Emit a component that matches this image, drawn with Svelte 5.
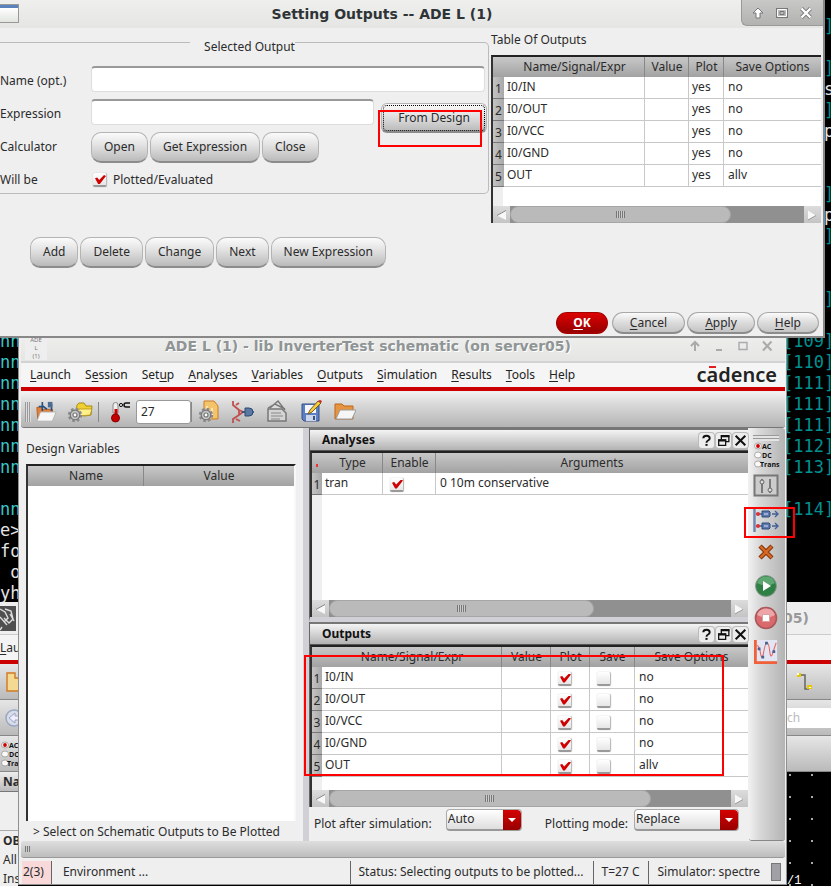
<script lang="ts">
	type Col = { label: string; width?: number };

	const menus: [string, number][] = [
		['Launch', 0],
		['Session', 1],
		['Setup', 3],
		['Analyses', 0],
		['Variables', 0],
		['Outputs', 0],
		['Simulation', 0],
		['Results', 0],
		['Tools', 0],
		['Help', 0]
	];

	const dialogCols: Col[] = [
		{ label: '', width: 11 },
		{ label: 'Name/Signal/Expr', width: 141 },
		{ label: 'Value', width: 44 },
		{ label: 'Plot', width: 35 },
		{ label: 'Save Options' }
	];
	const analysisCols: Col[] = [
		{ label: '', width: 10 },
		{ label: 'Type', width: 61 },
		{ label: 'Enable', width: 53 },
		{ label: 'Arguments' }
	];
	const outputCols: Col[] = [
		{ label: '', width: 10 },
		{ label: 'Name/Signal/Expr', width: 180 },
		{ label: 'Value', width: 49 },
		{ label: 'Plot', width: 39 },
		{ label: 'Save', width: 45 },
		{ label: 'Save Options' }
	];

	let outputs = $state([
		{ name: 'I0/IN', plot: true, save: false, options: 'no' },
		{ name: 'I0/OUT', plot: true, save: false, options: 'no' },
		{ name: 'I0/VCC', plot: true, save: false, options: 'no' },
		{ name: 'I0/GND', plot: true, save: false, options: 'no' },
		{ name: 'OUT', plot: true, save: false, options: 'allv' }
	]);
	let tranEnabled = $state(true);
	let plotted = $state(true);
	let temperature = $state('27');

	// terminal rows: left text, right text, plain (white) or coloured
	const term: [string, string, boolean?][] = [
		['', ''],
		['', '    ]'],
		['', ''],
		['', '    ]'],
		['', '    s', true],
		['', '    ]'],
		['', '    p', true],
		['', ''],
		['', ''],
		['', '    ]'],
		['', '    p', true],
		['', '    ]'],
		['', ''],
		['', ''],
		['', '    ]'],
		['', ''],
		['nn', '[109]'],
		['nn', '[110]'],
		['nn', '[111]'],
		['nn', '[111]'],
		['nn', '[111]'],
		['nn', '[112]'],
		['nn', '[113]'],
		['', ''],
		['nn', '[114]'],
		['e>', '', true],
		['fo', '', true],
		[' o', '', true],
		['yh', '', true]
	];
</script>

{#snippet head(cols: Col[], mark = false)}
	<colgroup>
		{#each cols as c}
			<col style={c.width ? `width: ${c.width}px` : undefined} />
		{/each}
	</colgroup>
	<thead>
		<tr>
			{#each cols as c, i}
				<th class:mark={mark && i === 0}>{c.label}</th>
			{/each}
		</tr>
	</thead>
{/snippet}

{#snippet scrollbar(size: number)}
	<div class="scrollbar">
		<button type="button" class="arrow" aria-label="Scroll left">
			<svg viewBox="0 0 16 16"><path d="M13 3.500 4 8.500l9 4.500z" fill="#f8f8f8" /><path d="M13 3.500 4 8.500" stroke="#888" fill="none" /></svg>
		</button>
		<div class="track">
			<div class="thumb" style="width: {size}%"><i></i></div>
		</div>
		<button type="button" class="arrow" aria-label="Scroll right">
			<svg viewBox="0 0 16 16"><path d="M4 3.500 12 8.500l-8 4.500z" fill="#f8f8f8" /><path d="M4 13l8-4.500" stroke="#999" fill="none" /></svg>
		</button>
	</div>
{/snippet}

{#snippet gear()}
	<g stroke="#777" stroke-width="1.200" fill="#c4c4c4">
		<circle cx="8" cy="15" r="6" stroke-dasharray="2.600 2.100" stroke-width="2.400" stroke="#8a8a8a" />
		<circle cx="8" cy="15" r="4.800" />
		<circle cx="8" cy="15" r="2" fill="#fff" />
	</g>
{/snippet}

{#snippet dockTitle(title: string)}
	<header class="dock-title">
		<h2>{title}</h2>
		<button aria-label="{title} help"><svg viewBox="0 0 14 14"><path d="M4 5Q4 2.500 7 2.500T10 5Q10 6.300 8.500 7Q7 7.700 7 9" fill="none" stroke="#111" stroke-width="1.800" /><path d="M6 10.200h2v1.800H6z" fill="#111" /></svg></button>
		<button aria-label="Float {title}"><svg viewBox="0 0 14 14"><path d="M5 6V2.500h7V8H9.500M2.500 6.500H9v5H2.500z" fill="none" stroke="#111" stroke-width="1.200" /><path d="M4.500 2h8v2h-8zM2 6h7.500v2H2z" fill="#111" /></svg></button>
		<button aria-label="Close {title}"><svg viewBox="0 0 14 14"><path d="M2.500 2.500l9 9M11.500 2.500l-9 9" stroke="#111" stroke-width="1.900" /></svg></button>
	</header>
{/snippet}

{#snippet modes()}
	<svg class="modes" viewBox="0 0 28 28">
		{#each ['AC', 'DC', 'Trans'] as m, i}
			<ellipse cx="5" cy={5 + i * 9} rx="3.500" ry="3" fill="#fafafa" stroke="#999" stroke-width=".8" />
			<text x={i === 2 ? 7 : 9} y={8 + i * 9}>{m}</text>
		{/each}
		<circle cx="5" cy="5" r="1.900" fill="#d00000" />
	</svg>
{/snippet}

<div class="desktop">
	<div class="terminal">
		{#each term as [left, right, plain]}
			<div class="line" class:plain><span>{left}</span><span class="tail">{right}</span></div>
		{/each}
	</div>

	<section class="schematic" aria-label="Schematic editor">
		<div class="s-title">
			<svg class="s-icon" viewBox="0 0 18 26">
				<rect width="16" height="25" y="1" fill="#505050" />
				<path d="M0 4l5 3 3 6-4 4M5 4l6 2 2 8-4 4-5-5M0 12l7 8M2 22l-2 3M10 9l4 7" fill="none" stroke="#ddd" stroke-width="1.400" />
			</svg>
			<span>05)</span>
		</div>
		<div class="s-menu"><u>L</u>au</div>
		<div class="s-bar">
			<svg viewBox="0 0 18 22"><path d="M7 2h8v5h6v13H7z" fill="#f4d992" stroke="#cf7a22" stroke-width="1.400" /></svg>
			<svg class="wire" viewBox="0 0 44 34"><path d="M13 10h5v14h4" fill="none" stroke="#666" stroke-width="1.500" /><path d="M10 8h4v4h-4zM20 20h5v4h-5z" fill="#e8c800" /><path d="M10 8h2v2h-2zM22 22h2v1h-2z" fill="#fff" /></svg>
		</div>
		<div class="s-bar">
			<svg viewBox="0 0 18 22"><circle cx="14" cy="11" r="8" fill="#d7dce8" stroke="#9aa6c4" stroke-width="1.500" /><path d="M18 9h-3V6l-6 5 6 5v-3h3" fill="#eef" stroke="#9aa6c4" /></svg>
			<span class="s-search">ch</span>
		</div>
		<div class="s-bar">{@render modes()}</div>
		<div class="s-body">
			<div class="s-nav">
				<b class="s-head">Na</b>
				<div class="s-gap"></div>
				<b>OB</b>
				<span>All</span>
				<span>Ins</span>
			</div>
			<div class="s-canvas">/1</div>
		</div>
	</section>

	<main class="ade">
		<header class="ade-title">
			<div class="ade-icon">ADE<br />L<br />(1)</div>
			<h1>ADE L (1) - lib InverterTest schematic (on server05)</h1>
			<div class="ade-controls">
				<button aria-label="Shade"><svg viewBox="0 0 12 12"><path d="M6 11V2M2 6l4-4 4 4" /></svg></button>
				<button aria-label="Minimize"><svg viewBox="0 0 12 12"><path d="M3 10h6" /></svg></button>
				<button aria-label="Maximize"><svg viewBox="0 0 12 12"><path d="M2 2.500h8v7H2z" stroke-width="1.400" /></svg></button>
				<button aria-label="Close window"><svg viewBox="0 0 12 12"><path d="M2 1.500l8.500 9M10.500 1.500l-8.500 9" /></svg></button>
			</div>
		</header>
		<nav class="menubar">
			{#each menus as [label, key]}
				<a href="#{label.toLowerCase()}">{label.slice(0, key)}<u>{label[key]}</u>{label.slice(key + 1)}</a>
			{/each}
			<span class="logo">c<span>a</span>dence</span>
		</nav>

		<div class="toolbar">
			<i class="grip"></i>
			<button aria-label="Setup design"><svg viewBox="0 0 24 24"><path d="M2 7h5l2 2h10v11H3z" fill="#e0803a" stroke="#b85c1c" /><path d="M6 12h17l-4 10H2z" fill="#f6f6f6" stroke="#b0b0b0" /><path d="M8 1v10M8 6H4M8 5l5 4M18 3v8" stroke="#28527e" stroke-width="1.800" fill="none" /><path d="M14 1h5v6h-5z" fill="#4d6c94" /></svg></button>
			<button class="wide" aria-label="Load state"><svg viewBox="0 0 26 24"><path d="M10 5l2-2h5l2 3h6l-1 9-6 1-9-1z" fill="#f0d030" stroke="#a98a1a" /><path d="M12 9h13l-2 6-12 1z" fill="#fff08a" stroke="#a98a1a" stroke-width=".7" />{@render gear()}</svg></button>
			<i class="sep"></i>
			<label class="temp">
				<svg viewBox="0 0 22 24"><path d="M3 5a2.500 2.500 0 0 1 5 0v8H3z" fill="#eee" stroke="#888" /><path d="M4.500 9h3v8h-3z" fill="#c00" /><circle cx="5.500" cy="18" r="4" fill="#c30000" stroke="#8a0000" /><circle cx="11" cy="5" r="1.600" fill="none" stroke="#111" /><path d="M20 3h-4q-2 0-2 2t2 2h4" fill="none" stroke="#111" stroke-width="1.500" /></svg>
				<input type="text" bind:value={temperature} aria-label="Temperature" />
			</label>
			<i class="sep tight"></i>
			<button aria-label="Edit model"><svg viewBox="0 0 22 24"><path d="M6 1h10l4 5v13H6z" fill="#f3c46c" stroke="#cf7a22" /><path d="M9 6v10M14 8v8" stroke="#ffe7b4" stroke-width="2" />{@render gear()}</svg></button>
			<button class="gap" aria-label="Simulation files"><svg viewBox="0 0 22 24"><path d="M1 1v4l6 5v5l-6 4v4M4 5l3-2M4 19l4 2M7 10l4 2-4 3" fill="none" stroke="#c05050" stroke-width="1.800" /><path d="M10 12h12" stroke="#2b4d78" stroke-width="1.600" /><path d="M13 8h4q4 0 4 4t-4 4h-4z" fill="#5b78a4" stroke="#2c4a70" /></svg></button>
			<button class="gap" aria-label="Notes"><svg viewBox="0 0 22 24"><path d="M4 8l8-7 7 9M2 8l7-4 10 5" fill="#ddd" stroke="#777" stroke-width="1.400" /><path d="M2 9h14l4 4v8H2z" fill="#d4d4d4" stroke="#777" stroke-width="1.500" /><path d="M5 13h10M5 16h12M5 19h9" stroke="#888" /></svg></button>
			<button class="gap" aria-label="Save state"><svg viewBox="0 0 22 24"><path d="M2 4h17v17H4l-2-2z" fill="#5b7fc0" stroke="#35518a" /><path d="M5 5h11v8H5z" fill="#f4f7ff" /><path d="M6 15h10v6H6z" fill="#ccd6ea" /><path d="M13 16h2v4h-2z" fill="#35518a" /><path d="M8 14l2-4 8-9 3 2-9 9z" fill="#f3cd3c" stroke="#7d5b1a" /><path d="M18 1l3 2 1-2-2-1z" fill="#c22" /></svg></button>
			<button class="gap" aria-label="Open results"><svg viewBox="0 0 22 24"><path d="M1 4h7l2 2h9v13H1z" fill="#e79440" stroke="#bb661b" /><path d="M6 10h16l-4 9H2z" fill="#f6f6f6" stroke="#9c9c9c" /></svg></button>
		</div>

		<div class="work">
			<div class="variables">
				<h2>Design Variables</h2>
				<div class="grid-box plainbox">
					<table>
						<colgroup><col class="vname" /><col /></colgroup>
						<thead><tr><th>Name</th><th>Value</th></tr></thead>
					</table>
				</div>
				<p>&gt; Select on Schematic Outputs to Be Plotted</p>
			</div>

			<div class="docks">
				<section class="dock analyses">
					{@render dockTitle('Analyses')}
					<div class="grid-box">
						<table>
							{@render head(analysisCols, true)}
							<tbody>
								<tr>
									<th>1</th>
									<td>tran</td>
									<td class="tick"><input type="checkbox" bind:checked={tranEnabled} aria-label="Enable tran" /></td>
									<td>0 10m conservative</td>
								</tr>
							</tbody>
						</table>
						<div class="filler"></div>
						{@render scrollbar(66)}
					</div>
				</section>
				<section class="dock outputs">
					{@render dockTitle('Outputs')}
					<div class="grid-box">
						<table>
							{@render head(outputCols)}
							<tbody>
								{#each outputs as row, i}
									<tr>
										<th>{i + 1}</th>
										<td>{row.name}</td>
										<td></td>
										<td class="tick"><input type="checkbox" bind:checked={row.plot} aria-label="Plot {row.name}" /></td>
										<td class="tick"><input type="checkbox" bind:checked={row.save} aria-label="Save {row.name}" /></td>
										<td>{row.options}</td>
									</tr>
								{/each}
							</tbody>
						</table>
						<div class="filler"></div>
						{@render scrollbar(80)}
					</div>
				</section>
				<div class="plot-options">
					<label for="after">Plot after simulation:</label>
					<span class="combo"><select id="after"><option>Auto</option></select></span>
					<label class="second" for="mode">Plotting mode:</label>
					<span class="combo long"><select id="mode"><option>Replace</option></select></span>
				</div>
			</div>

			<div class="sidebar">
				<i class="hgrip"></i>
				<button aria-label="Choose analyses">{@render modes()}</button>
				<button aria-label="Edit variables"><svg viewBox="0 0 26 24"><path d="M1.500 1.500h23v20h-23z" fill="#ccc" stroke="#777" stroke-width="2" /><path d="M9 5v14M17 5v14" stroke="#666" stroke-width="1.600" /><circle cx="9" cy="8" r="2" fill="#ddd" stroke="#666" /><circle cx="17" cy="16" r="2" fill="#ddd" stroke="#666" /></svg></button>
				<button class="setup" aria-label="Setup outputs"><svg viewBox="0 0 26 24"><path d="M1.500 0v24" stroke="#6f86b0" stroke-width="2.500" />{#each [6, 18] as y}<path d="M3 {y}h14M19 {y}h6M22 {y - 3}l3 3-3 3" stroke="#44609a" stroke-width="1.400" fill="none" /><circle cx="5" cy={y} r="2" fill="#d33" /><path d="M9 {y - 3}h7l1 1v4l-1 1H9z" fill="#5d7bb0" stroke="#2d4a7c" /><path d="M11 {y}h4" stroke="#d7e0f0" />{/each}</svg></button>
				<button aria-label="Delete"><svg viewBox="0 0 26 24"><path d="M7 6l12 12M19 6L7 18" stroke="#8a3b0c" stroke-width="4.500" /><path d="M7.500 6.500l11 11M18.500 6.500l-11 11" stroke="#d86a24" stroke-width="2.200" /></svg></button>
				<button class="run" aria-label="Run"><svg viewBox="0 0 26 24"><circle cx="13" cy="12" r="10.500" fill="#2e8044" stroke="#8a9a8e" /><path d="M4 9a9.500 9.500 0 0 1 18 0q-9 5-18 0" fill="#5fa873" /><path d="M10 7l8 5-8 5z" fill="#fff" /></svg></button>
				<button class="stop" aria-label="Stop"><svg viewBox="0 0 26 24"><circle cx="13" cy="12" r="10.500" fill="#d9696d" stroke="#a9585a" stroke-width="1.600" /><path d="M4 9a9.500 9.500 0 0 1 18 0q-9 5-18 0" fill="#eda5a7" /><path d="M9.500 8.500h7v7h-7z" fill="#fff" stroke="#d9a0a0" /></svg></button>
				<button class="plot" aria-label="Plot outputs"><svg viewBox="0 0 26 26"><path d="M3 0h22v23H3z" fill="#e3e6f2" /><path d="M3 6q3 0 4 8t3 2q2-13 4-13t3 9 3 3 4-12" fill="none" stroke="#e06a6a" stroke-width="1.200" /><path d="M1.500 0v24.500H25" fill="none" stroke="#f0603a" stroke-width="3" /><path d="M4 8h3v3H4zM8 17h3v3H8zM12 2h3v3h-3zM20 11h3v3h-3z" fill="#46618f" /></svg></button>
			</div>
		</div>

		<div class="lowbar"><i></i></div>
		<footer class="status">
			<span class="count">2(3)</span>
			<span class="env">Environment ...</span>
			<span class="msg">Status: Selecting outputs to be plotted...</span>
			<span>T=27 C</span>
			<span>Simulator: spectre</span>
			<i class="led"></i>
		</footer>
	</main>

	<form class="dialog" onsubmit={(e) => e.preventDefault()}>
		<header class="dialog-title">
			<i class="win-icon"></i>
			<h1>Setting Outputs -- ADE L (1)</h1>
			<div class="dialog-controls">
				<button type="button" aria-label="Shade dialog"><svg viewBox="0 0 14 14"><path d="M7 2l5 5H9v5H5V7H2z" fill="#fff" stroke="#777" /></svg></button>
				<button type="button" aria-label="Maximize dialog"><svg viewBox="0 0 14 14"><path d="M2.500 3.500h9v7h-9z" fill="none" stroke="#777" stroke-width="3" /><path d="M2.500 3.500h9v7h-9z" fill="#bbb" stroke="#fff" /><path d="M5 5.500h4v3H5z" fill="none" stroke="#777" /></svg></button>
				<button type="button" aria-label="Close dialog"><svg viewBox="0 0 14 14"><path d="M2.500 2.500l9 9M11.500 2.500l-9 9" stroke="#777" stroke-width="4" /><path d="M2.500 2.500l9 9M11.500 2.500l-9 9" stroke="#fff" stroke-width="2.400" /></svg></button>
			</div>
		</header>

		<div class="dialog-body">
			<fieldset>
				<legend>Selected Output</legend>
				<div class="field">
					<label for="name">Name (opt.)</label>
					<input id="name" type="text" />
				</div>
				<div class="field">
					<label for="expr">Expression</label>
					<input id="expr" type="text" />
					<button type="button" class="btn focus">From Design</button>
				</div>
				<div class="field calc">
					<span>Calculator</span>
					<button type="button" class="btn">Open</button>
					<button type="button" class="btn">Get Expression</button>
					<button type="button" class="btn">Close</button>
				</div>
				<div class="field will">
					<span>Will be</span>
					<input id="plotted" type="checkbox" bind:checked={plotted} />
					<label for="plotted">Plotted/Evaluated</label>
				</div>
			</fieldset>

			<section class="outputs-list">
				<h2>Table Of Outputs</h2>
				<div class="grid-box">
					<table>
						{@render head(dialogCols)}
						<tbody>
							{#each outputs as row, i}
								<tr>
									<th>{i + 1}</th>
									<td>{row.name}</td>
									<td></td>
									<td>yes</td>
									<td>{row.options}</td>
								</tr>
							{/each}
						</tbody>
					</table>
					<div class="filler"></div>
					{@render scrollbar(75)}
				</div>
			</section>
		</div>

		<div class="actions">
			{#each ['Add', 'Delete', 'Change', 'Next', 'New Expression'] as label}
				<button type="button" class="btn">{label}</button>
			{/each}
		</div>

		<footer class="confirm">
			<button class="pill ok"><u>O</u>K</button>
			{#each ['Cancel', 'Apply', 'Help'] as label}
				<button type="button" class="pill"><u>{label[0]}</u>{label.slice(1)}</button>
			{/each}
		</footer>
	</form>

	<div class="callout design"></div>
	<div class="callout setup-icon"></div>
	<div class="callout output-rows"></div>
</div>

<style>
	:global(body) {
		margin: 0;
		background: #000;
	}

	.desktop {
		position: relative;
		height: 100vh;
		min-height: 860px;
		overflow: hidden;
		background: #000;
		color: #2b2b2b;
		font: 12px/16px 'Noto Sans', sans-serif;
	}

	.desktop :is(button, input, select) {
		box-sizing: border-box;
		margin: 0;
		padding: 0;
		border: 0;
		background: none;
		color: inherit;
		font: inherit;
	}

	.desktop :is(h1, h2, p) {
		margin: 0;
		font: inherit;
	}

	i,
	svg {
		display: block;
		flex: none;
	}

	u {
		text-underline-offset: 2px;
	}

	/* terminal */
	.terminal {
		color: #3cc8c8;
		font: 17px/21px 'DejaVu Sans Mono', monospace;
		white-space: pre;
	}

	.line {
		display: flex;
		justify-content: space-between;
		height: 21px;
	}

	.line:first-child {
		height: 16px;
	}

	.tail {
		width: 48px;
		color: #009090;
	}

	.plain,
	.plain .tail {
		color: #e4e4e4;
	}

	/* schematic window in the background */
	.schematic {
		position: absolute;
		inset: 602px 0 0;
		display: flex;
		flex-direction: column;
		overflow: hidden;
		background: #efefef;
	}

	.s-title {
		display: flex;
		flex: none;
		justify-content: space-between;
		align-items: center;
		height: 32px;
		padding-right: 22px;
		border-bottom: 1px solid #ccc;
		color: #999;
		font: bold 14px/20px 'DejaVu Sans', sans-serif;
	}

	.s-icon {
		width: 18px;
		height: 26px;
	}

	.s-menu {
		flex: none;
		height: 25px;
		border-bottom: 4px solid #c00;
		background: #f4f4f4;
		line-height: 26px;
	}

	.s-bar {
		display: flex;
		flex: none;
		justify-content: space-between;
		align-items: center;
		height: 35px;
		border-bottom: 1px solid #888;
		background: linear-gradient(#e6e6e6, #bababa);
	}

	.s-bar svg {
		width: 18px;
		height: 22px;
	}

	.s-bar .wire {
		width: 44px;
		height: 34px;
	}

	.s-bar .modes {
		width: 28px;
		height: 28px;
	}

	.s-search {
		width: 44px;
		background: #fff;
		color: #bbb;
		line-height: 20px;
	}

	.s-body {
		display: flex;
		flex: 1;
		justify-content: space-between;
		min-height: 0;
		background: #000;
	}

	.s-nav {
		display: flex;
		flex-direction: column;
		width: 18px;
		overflow: hidden;
		background: #efefef;
		line-height: 19px;
	}

	.s-nav > * {
		flex: none;
	}

	.s-nav > :not(.s-gap) {
		padding-left: 3px;
	}

	.s-head {
		border-bottom: 1px solid #777;
		background: linear-gradient(#eee, #bbb);
	}

	.s-gap {
		height: 38px;
		border-bottom: 1px solid #aaa;
	}

	.s-canvas {
		display: flex;
		align-items: flex-end;
		width: 44px;
		background: radial-gradient(circle at 3px 3px, #aaa 1px, transparent 1px) 0 0 / 22px 22px;
		color: #fff;
		font-family: 'Liberation Mono', monospace;
		line-height: 10px;
	}

	/* ADE window */
	.ade {
		position: absolute;
		inset: 332px 44px 1px 18px;
		display: flex;
		flex-direction: column;
		padding: 0 1px 0 2px;
		border: 1px solid #909090;
		background: #efefef;
	}

	.ade-title {
		display: flex;
		align-items: flex-start;
		height: 28px;
		border-bottom: 2px solid #d2d2d2;
		background: linear-gradient(#efefee, #e5e5e3);
	}

	.ade-icon {
		width: 22px;
		margin: 3px 0 0 4px;
		background: #eee;
		color: #777;
		font-size: 6px;
		line-height: 8px;
		text-align: center;
	}

	.ade h1 {
		flex: 1;
		color: #8f9595;
		font: bold 14px/26px 'DejaVu Sans', sans-serif;
		text-align: center;
		text-shadow: 1px 1px #fff;
	}

	.ade-controls {
		display: flex;
		gap: 12px;
		padding: 7px 12px 0 0;
	}

	.ade-controls svg {
		width: 12px;
		height: 12px;
		fill: none;
		stroke: #aaa;
		stroke-width: 2;
	}

	.menubar {
		display: flex;
		align-items: center;
		gap: 14px;
		height: 24px;
		padding: 0 8px 0 9px;
		border-bottom: 4px solid #cc0000;
		background: #f5f5f5;
	}

	.menubar a {
		color: #222;
		text-decoration: none;
	}

	.logo {
		margin-left: auto;
		color: #222;
		font-size: 20px;
		font-weight: 600;
		line-height: 20px;
	}

	.logo span {
		position: relative;
	}

	.logo span::before {
		position: absolute;
		top: 5px;
		left: 2px;
		width: 7px;
		height: 2px;
		background: #e02020;
		content: '';
	}

	.toolbar {
		display: flex;
		align-items: center;
		height: 31px;
		margin-top: 1px;
		padding: 4px 0 0 4px;
		border-bottom: 1px solid #777;
		border-radius: 3px;
		background: linear-gradient(#f2f2f2, #dcdcdc 30%, #b4b4b4);
	}

	.toolbar button {
		width: 22px;
		height: 24px;
	}

	.toolbar .wide {
		width: 26px;
		margin-left: 10px;
	}

	.toolbar .gap {
		margin-left: 12px;
	}

	.toolbar button svg {
		width: 100%;
		height: 24px;
	}

	.grip {
		width: 6px;
		height: 20px;
		margin-right: 4px;
		background: repeating-linear-gradient(to right, #999 0 1px, #ddd 1px 2px);
	}

	.sep {
		width: 1px;
		height: 20px;
		margin: 0 11px 0 5px;
		background: #888;
	}

	.sep.tight {
		margin: 0 6px 0 0;
	}

	.temp {
		display: flex;
		align-items: center;
		gap: 4px;
	}

	.temp svg {
		width: 22px;
		height: 24px;
	}

	.temp input {
		width: 55px;
		height: 24px;
		padding: 0 4px;
		border: 1px solid #999;
		border-radius: 3px;
		background: #fff;
	}

	.work {
		display: flex;
		flex: 1;
		min-height: 0;
	}

	.variables {
		display: flex;
		flex: 0 1 273px;
		flex-direction: column;
		padding: 13px 4px 1px 5px;
		border-right: 6px solid #d0d0d6;
	}

	.variables .grid-box {
		flex: 1;
		margin: 7px 3px 0 0;
	}

	.variables p {
		padding: 3px 0 0 7px;
		white-space: nowrap;
	}

	.vname {
		width: 116px;
	}

	.docks {
		display: flex;
		flex: 1;
		flex-direction: column;
		min-width: 0;
	}

	.dock {
		display: flex;
		flex-direction: column;
		border-left: 1px solid #666;
	}

	.analyses {
		flex: 1;
		border-bottom: 5px solid #d0d0d6;
	}

	.outputs .grid-box {
		height: 162px;
	}

	.analyses .grid-box {
		flex: 1;
	}

	.dock-title {
		display: flex;
		align-items: center;
		gap: 2px;
		height: 20px;
		padding: 0 0 0 12px;
		border-top: 2px solid #777;
		border-bottom: 1px solid #555;
		background: linear-gradient(#f4f4f4, #b2b2b2);
	}

	.dock-title h2 {
		flex: 1;
		color: #111;
		font-weight: bold;
	}

	.dock-title button {
		width: 15px;
		height: 15px;
		border-radius: 3px;
		background: #ededed;
		box-shadow: 0 0 0 1px #bbb;
	}

	.dock-title svg {
		width: 15px;
		height: 15px;
	}

	/* tables */
	.grid-box {
		display: flex;
		flex-direction: column;
		box-sizing: border-box;
		border-top: 2px solid #222;
		border-left: 2px solid #333;
		background: linear-gradient(to right, #efefef 10px, #fff 10px);
	}

	.grid-box.plainbox {
		border-right: 2px solid #f8f8f8;
		background: #fff;
	}

	table {
		width: 100%;
		border-spacing: 0;
		table-layout: fixed;
	}

	thead th {
		height: 20px;
		padding: 0;
		background: linear-gradient(#c8c8c8, #a2a2a2);
		box-shadow: inset -1px 0 #888;
		font-weight: normal;
		line-height: 18px;
		white-space: nowrap;
	}

	thead th:first-child:empty {
		box-shadow: none;
	}

	thead th:last-child {
		box-shadow: none;
	}

	thead th.mark {
		background:
			linear-gradient(#e33, #e33) 4px 11px / 2px 3px no-repeat,
			linear-gradient(#c8c8c8, #a2a2a2);
	}

	tbody th {
		height: 19px;
		padding: 2px 0 0;
		border-bottom: 1px solid #777;
		background: linear-gradient(to right, #c4c4c4, #a8a8a8);
		font-weight: normal;
		line-height: 19px;
	}

	td {
		height: 19px;
		padding: 0 0 2px 3px;
		border-right: 1px solid #c8c8c8;
		border-bottom: 1px solid #c8c8c8;
		background: #fff;
		line-height: 19px;
		white-space: nowrap;
	}

	td:last-child {
		padding-left: 4px;
		border-right: 0;
	}

	td.tick {
		padding: 2px 0 0 7px;
	}

	.filler {
		flex: 1;
	}

	.scrollbar {
		display: flex;
		height: 17px;
	}

	.scrollbar .arrow {
		width: 17px;
		background: linear-gradient(#dcdcdc, #c4c4c4);
	}

	.arrow svg {
		width: 16px;
		height: 16px;
	}

	.track {
		flex: 1;
		background: #909090;
	}

	.thumb {
		display: flex;
		align-items: center;
		justify-content: center;
		height: 17px;
		box-sizing: border-box;
		border: 1px solid #a6a6a6;
		border-radius: 9px;
		background: #bababa;
	}

	.thumb i,
	.lowbar i {
		width: 9px;
		height: 7px;
		background: repeating-linear-gradient(to right, #777 0 1px, #ccc 1px 2px);
	}

	input[type='checkbox'] {
		display: block;
		width: 14px;
		height: 14px;
		border-right: 1px solid #bbb;
		border-bottom: 2px solid #999;
		border-radius: 2px;
		background: linear-gradient(#fff, #e6e6e6);
		box-shadow: 0 0 1px #999;
		appearance: none;
	}

	input[type='checkbox']:checked::before {
		display: block;
		width: 11px;
		height: 9px;
		margin: 2px 0 0 2px;
		background: #d00000;
		clip-path: polygon(0 35%, 20% 28%, 38% 55%, 82% 0, 100% 12%, 44% 100%, 28% 100%);
		content: '';
	}

	.plot-options {
		display: flex;
		align-items: center;
		height: 34px;
		padding: 0 9px 0 5px;
		white-space: nowrap;
	}

	.plot-options .second {
		margin-left: auto;
	}

	.combo {
		position: relative;
		width: 76px;
		margin: 0 0 8px 14px;
	}

	.combo.long {
		width: 105px;
		margin-left: 6px;
	}

	.combo select {
		display: block;
		width: 100%;
		height: 22px;
		padding: 0 20px 1px 1px;
		border: 1px solid #aaa;
		border-bottom: 2px solid #999;
		border-radius: 4px;
		background: linear-gradient(#fff, #dedede);
		appearance: none;
	}

	.combo::before {
		position: absolute;
		top: 1px;
		right: 1px;
		width: 18px;
		height: 20px;
		border-radius: 0 4px 4px 0;
		background: linear-gradient(#d40000, #980000);
		content: '';
		pointer-events: none;
	}

	.combo::after {
		position: absolute;
		top: 9px;
		right: 6px;
		border: 4px solid transparent;
		border-top-color: #fff;
		border-bottom: 0;
		content: '';
		pointer-events: none;
	}

	.sidebar {
		display: flex;
		flex: none;
		flex-direction: column;
		align-items: center;
		box-sizing: border-box;
		width: 36px;
		margin-left: 1px;
		padding: 7px 2px 0 0;
		border-bottom: 1px solid #888;
		border-radius: 3px;
		background: linear-gradient(to right, #f0f0f0, #d8d8d8 30%, #b4b4b4);
	}

	.sidebar button {
		width: 26px;
		height: 24px;
		margin-bottom: 10px;
	}

	.sidebar svg {
		width: 26px;
		height: 24px;
	}

	.sidebar button:first-of-type {
		height: 28px;
		margin-bottom: 5px;
	}

	.sidebar .modes {
		width: 28px;
		height: 28px;
	}

	.sidebar .setup {
		margin-bottom: 8px;
	}

	.sidebar .run {
		margin-bottom: 8px;
	}

	.modes text {
		fill: #111;
		font: bold 7px 'Open Sans', sans-serif;
	}

	.hgrip {
		width: 26px;
		height: 6px;
		background: repeating-linear-gradient(#999 0 1px, #e4e4e4 1px 3px);
	}

	.lowbar {
		display: flex;
		align-items: center;
		height: 16px;
		margin-bottom: 2px;
		padding-left: 4px;
		border-bottom: 1px solid #999;
		border-radius: 3px;
		background: linear-gradient(#dedede, #bdbdbd);
	}

	.lowbar i {
		width: 6px;
		height: 6px;
	}

	.status {
		display: flex;
		height: 23px;
		padding: 1px 4px 0 1px;
		line-height: 22px;
		white-space: nowrap;
	}

	.status span {
		padding: 0 9px 0 8px;
		border-right: 1px solid #666;
	}

	.status .count {
		padding: 0 7px 0 1px;
		background: #f8d8d8;
	}

	.status .env {
		flex: 1;
		padding-left: 11px;
	}

	.status span:last-of-type {
		border: 0;
	}

	.led {
		width: 8px;
		height: 16px;
		margin: 2px 0 0 2px;
		border: 1px solid #777;
		background: #a0a0a6;
	}

	/* dialog */
	.dialog {
		position: absolute;
		inset: 0 6px auto 0;
		display: flex;
		flex-direction: column;
		box-sizing: border-box;
		height: 338px;
		border: solid #888;
		border-width: 0 2px 2px 0;
		background: #efefef;
	}

	.dialog-title {
		display: flex;
		align-items: flex-start;
		height: 28px;
		background: linear-gradient(#efefee, #e5e5e3);
	}

	.win-icon {
		width: 18px;
		height: 17px;
		margin-top: 4px;
		border: 1px solid #999;
		border-width: 1px 1px 1px 0;
		background: linear-gradient(#5a82bd 3px, #fff 3px, #e2e5e0);
	}

	.dialog h1 {
		flex: 1;
		padding-left: 4px;
		color: #2e3436;
		font: bold 14px/28px 'DejaVu Sans', sans-serif;
		text-align: center;
	}

	.dialog-controls {
		display: flex;
		gap: 10px;
		align-items: center;
		height: 25px;
		padding: 0 10px 0 9px;
		border-bottom: 1px solid #999;
		border-left: 1px solid #999;
		border-bottom-left-radius: 6px;
		background: linear-gradient(#c8c8c6, #b2b2b0);
	}

	.dialog-controls svg {
		width: 14px;
		height: 14px;
	}

	.dialog-body {
		display: flex;
		gap: 2px;
		padding: 4px 2px 0 0;
	}

	fieldset {
		display: flex;
		flex: 1 1 489px;
		flex-direction: column;
		gap: 7px;
		box-sizing: border-box;
		min-width: 0;
		height: 162px;
		margin: 0;
		padding: 14px 3px 0 0;
		border: 1px solid #bbb;
		border-left: 0;
		border-radius: 0 5px 5px 0;
	}

	legend {
		margin: 0 auto;
		padding: 10px 0 0 14px;
		line-height: 10px;
	}

	.field {
		display: flex;
		gap: 1px;
		align-items: center;
		height: 26px;
	}

	.field > :first-child {
		flex: none;
		width: 90px;
		padding-top: 3px;
	}

	.field input[type='text'] {
		flex: 1;
		height: 26px;
		padding: 0 4px;
		border: 1px solid #ddd;
		border-top: 2px solid #999;
		border-radius: 4px;
		background: #fff;
	}

	.field.calc {
		gap: 2px;
		height: 30px;
	}

	.field.calc > :first-child {
		width: 89px;
		padding-top: 0;
	}

	.field.will {
		gap: 3px;
		height: 22px;
	}

	.field.will > :first-child {
		padding-top: 0;
	}

	.field.will label {
		padding-left: 3px;
	}

	.btn {
		height: 31px;
		flex: none;
	}

	.desktop .btn {
		padding: 0 12px;
		border: 1px solid #b4b4b4;
		border-bottom: 2px solid #8c8c8c;
		border-radius: 10px;
		background: linear-gradient(#fbfbfb, #e4e4e4 40%, #bababa);
	}

	.desktop .btn.focus {
		height: 30px;
		margin: 12px -2px 0 6px;
		padding: 0 16px;
		border-radius: 6px;
		outline: 1px dotted #000;
		outline-offset: -3px;
	}

	.outputs-list {
		flex: 1 1 330px;
		min-width: 0;
	}

	.outputs-list .grid-box {
		height: 168px;
		margin-top: 7px;
	}

	.actions {
		display: flex;
		gap: 2px;
		padding: 14px 0 0 30px;
	}

	.confirm {
		display: flex;
		justify-content: flex-end;
		gap: 2px;
		margin-top: auto;
		padding: 0 4px 2px 0;
	}

	.desktop .pill {
		height: 22px;
		padding: 0 17px;
		border: 1px solid #a8a8a8;
		border-bottom: 2px solid #8c8c8c;
		border-radius: 11px;
		background: linear-gradient(#fbfbfb, #dcdcdc 50%, #c4c4c4);
		line-height: 18px;
	}

	.desktop .ok {
		margin-right: 2px;
		padding: 0 16px;
		border-color: #a40000;
		background: linear-gradient(#dc0000, #980000);
		color: #fff;
		font-weight: bold;
	}

	/* red marker rectangles */
	.callout {
		position: absolute;
		border: 2px solid #f00;
		pointer-events: none;
	}

	.design {
		top: 110px;
		left: 378px;
		width: 100px;
		height: 33px;
	}

	.setup-icon {
		top: 507px;
		right: 36px;
		width: 47px;
		height: 27px;
	}

	.output-rows {
		top: 655px;
		right: 107px;
		left: 304px;
		height: 117px;
	}
</style>
